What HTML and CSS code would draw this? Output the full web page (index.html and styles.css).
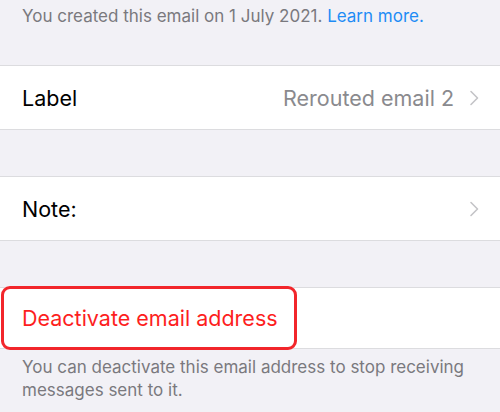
FILE: index.html
```html
<!DOCTYPE html>
<html lang="en">
<head>
    <meta charset="UTF-8">
    <meta name="viewport" content="width=device-width, initial-scale=1.0">
    <title>Email</title>
    <link rel="stylesheet" href="styles.css">
</head>
<body>
    <p class="note top-note">You created this email on 1 July 2021. <a href="#">Learn more.</a></p>

    <div class="group">
        <div class="row">
            <span class="row-title">Label</span>
            <span class="row-value">Rerouted email 2</span>
            <svg class="chevron" viewBox="0 0 10 16" width="10" height="16"><path d="M2 1.5 L8.5 8 L2 14.5" fill="none" stroke="#c4c4c7" stroke-width="1.6" stroke-linecap="round" stroke-linejoin="round"/></svg>
        </div>
    </div>

    <div class="group">
        <div class="row">
            <span class="row-title">Note:</span>
            <span class="row-value"></span>
            <svg class="chevron" viewBox="0 0 10 16" width="10" height="16"><path d="M2 1.5 L8.5 8 L2 14.5" fill="none" stroke="#c4c4c7" stroke-width="1.6" stroke-linecap="round" stroke-linejoin="round"/></svg>
        </div>
    </div>

    <div class="group last">
        <div class="row short">
            <span class="row-title danger">Deactivate email address</span>
            <div class="highlight"></div>
        </div>
    </div>

    <p class="note">You can deactivate this email address to stop receiving messages sent to it.</p>
</body>
</html>
```

FILE: styles.css
```css
* {
  box-sizing: border-box;
}

body {
  margin: 0;
  background-color: #f2f1f6;
  font-family: "Inter", "Liberation Sans", sans-serif;
}

.note {
  margin: 0;
  padding: 0 22px;
  color: #7a797e;
  font-size: 17px;
  line-height: 23px;
}

.note a {
  color: #1e8cf5;
  text-decoration: none;
}

.top-note {
  padding-top: 5px;
  margin-bottom: 37px;
}

.group {
  background: #fff;
  border-top: 1px solid #dcdcdf;
  border-bottom: 1px solid #dcdcdf;
  margin-bottom: 46px;
}

.group.last {
  margin-bottom: 7px;
}

/* rows */
.row {
  position: relative;
  display: flex;
  align-items: center;
  height: 63px;
  padding: 0 22px;
}

.row.short {
  height: 60px;
}

.row-title {
  color: #000;
  font-size: 21.5px;
}

.row-value {
  margin-left: auto;
  color: #8a8a8e;
  font-size: 21.5px;
}

.chevron {
  margin-left: 15px;
  margin-right: -1px;
}

.danger {
  color: #fd1e1e;
}

.highlight {
  position: absolute;
  left: 1px;
  top: -2px;
  width: 296px;
  height: 64px;
  border: 3.5px solid #f2262b;
  border-radius: 9px;
}
```
